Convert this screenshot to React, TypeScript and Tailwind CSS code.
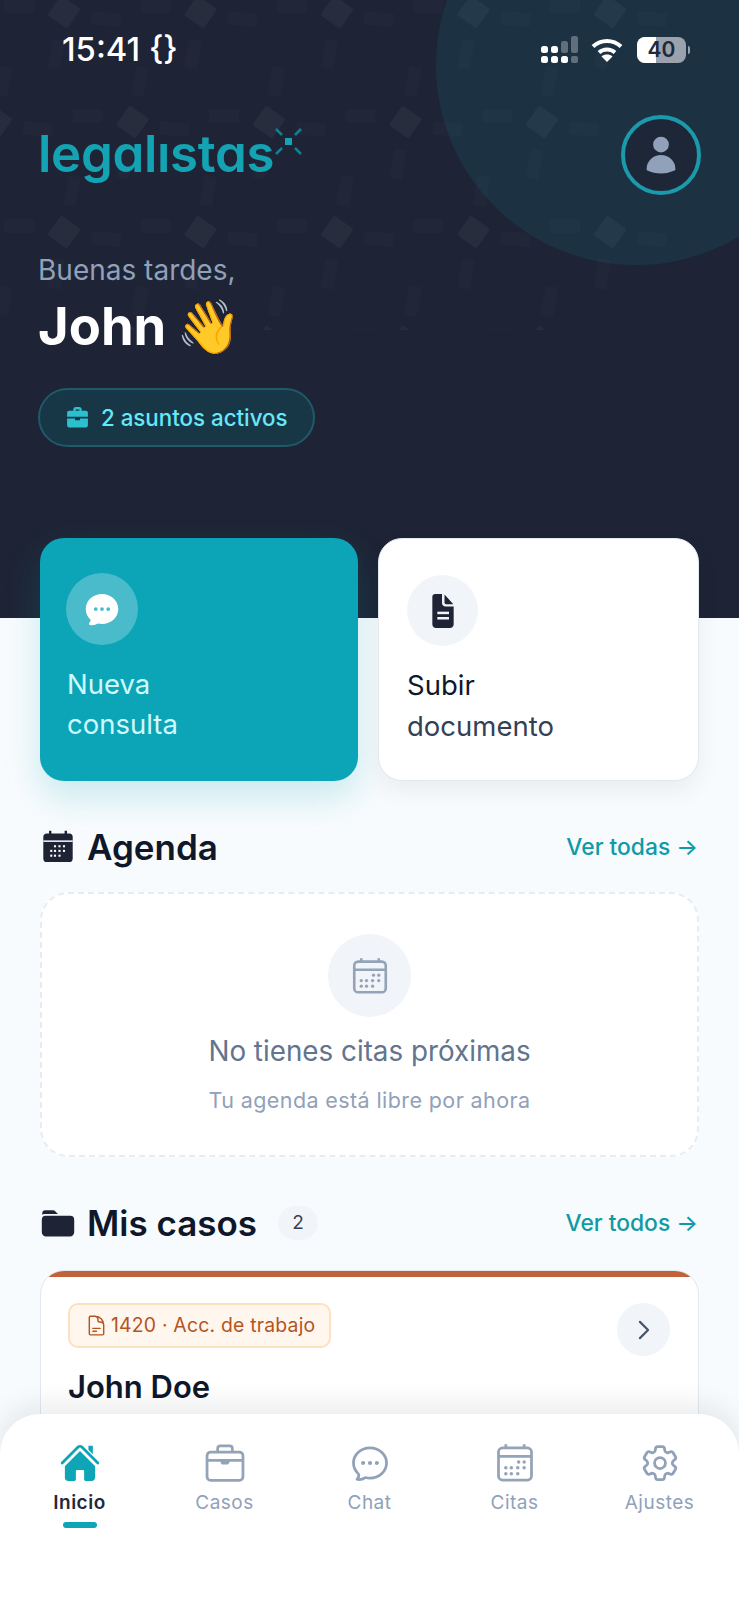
import {
  HiChatBubbleOvalLeftEllipsis,
  HiOutlineChatBubbleOvalLeftEllipsis,
  HiOutlineChevronRight,
  HiOutlineCog6Tooth,
  HiOutlineDocumentText,
  HiUser,
} from 'react-icons/hi2';

const rows = [12, 122, 232, 342];
const cols = [-4, 0, 1, 2, 3, 4];

function HeaderPattern() {
  return (
    <svg className="absolute left-0 top-0" width="739" height="330" viewBox="0 0 739 330">
      {rows.map((y, r) =>
        cols.map((c) => {
          const x = 64 + c * 136.5 - (r % 2 === 1 ? 68 : 0);
          return (
            <g key={`${r}-${c}`}>
              <rect x={x - 12} y={y - 12} width="24" height="24" rx="2" fill="#ffffff" opacity="0.045" transform={`rotate(35 ${x} ${y})`} />
              <rect x={x - 60} y={y - 13} width="30" height="14" rx="2" fill="#ffffff" opacity="0.015" />
              <rect x={x + 27} y={y} width="30" height="14" rx="2" fill="#ffffff" opacity="0.015" transform={`rotate(5 ${x + 42} ${y + 7})`} />
              <rect x={x - 14} y={y + 27} width="13" height="30" rx="2" fill="#ffffff" opacity="0.015" transform={`rotate(10 ${x - 8} ${y + 42})`} />
              <rect x={x - 67} y={y + 54} width="13" height="30" rx="2" fill="#ffffff" opacity="0.015" transform={`rotate(10 ${x - 61} ${y + 69})`} />
            </g>
          );
        }),
      )}
    </svg>
  );
}

function SignalIcon() {
  return (
    <svg width="38" height="28" viewBox="0 0 38 28">
      <rect x="0" y="10" width="7" height="7" rx="2.5" fill="#fff" />
      <rect x="10" y="10" width="7" height="7" rx="2.5" fill="#fff" />
      <rect x="0" y="20" width="7" height="7" rx="2.5" fill="#fff" />
      <rect x="10" y="20" width="7" height="7" rx="2.5" fill="#fff" />
      <rect x="20" y="20" width="7" height="7" rx="2.5" fill="#fff" />
      <rect x="20" y="5" width="7" height="12" rx="2.5" fill="#fff" opacity="0.3" />
      <rect x="30" y="0" width="7" height="17" rx="2.5" fill="#fff" opacity="0.3" />
      <rect x="30" y="20" width="7" height="7" rx="2" fill="#fff" opacity="0.3" />
    </svg>
  );
}

function WifiIcon() {
  return (
    <svg width="32" height="24" viewBox="0 0 32 24" fill="none" stroke="#fff" strokeWidth="4">
      <path d="M2 8.5C10 1 22 1 30 8.5" />
      <path d="M8 14.5C12.5 10.5 19.5 10.5 24 14.5" />
      <path d="M16 24l-5.5-5.5c3-2.6 8-2.6 11 0L16 24Z" fill="#fff" stroke="none" />
    </svg>
  );
}

function LogoMark() {
  return (
    <svg className="absolute -right-[29px] top-[-2px]" width="30" height="30" viewBox="0 0 30 30" stroke="#14808f" strokeWidth="2.5">
      <rect x="12" y="12" width="7" height="7" fill="#14a3b3" stroke="none" />
      <path d="M3 3l6 6M28 3l-6 6M3 28l6-6M28 28l-6-6" />
    </svg>
  );
}

function HomeIcon() {
  return (
    <svg width="44" height="44" viewBox="0 0 24 24" fill="#0ea5b7">
      <path d="M16.6 2.6h2.4v4.6l-2.4-2.4Z" />
      <path d="M11.47 3.841a.75.75 0 0 1 1.06 0l8.69 8.69a.75.75 0 1 0 1.06-1.06l-8.689-8.69a2.25 2.25 0 0 0-3.182 0l-8.69 8.69a.75.75 0 1 0 1.061 1.06l8.69-8.69Z" />
      <path d="m12 5.432 8.159 8.159c.03.03.06.058.091.086v6.198c0 1.035-.84 1.875-1.875 1.875H15a.75.75 0 0 1-.75-.75v-4.5a.75.75 0 0 0-.75-.75h-3a.75.75 0 0 0-.75.75V21a.75.75 0 0 1-.75.75H5.625a1.875 1.875 0 0 1-1.875-1.875v-6.198a2.29 2.29 0 0 0 .091-.086L12 5.432Z" />
    </svg>
  );
}

function CaseIcon() {
  return (
    <svg width="44" height="44" viewBox="0 0 24 24" fill="none" stroke="#94a3b8" strokeWidth="1.5" strokeLinejoin="round">
      <rect x="2.2" y="6" width="19.6" height="15.5" rx="2" />
      <path d="M8 6V4.2c0-.9.6-1.5 1.5-1.5h5c.9 0 1.5.6 1.5 1.5V6" />
      <path d="M2.2 10.5h19.6" />
      <path d="M10 10.5h4l-.6 1.5h-2.8Z" fill="#94a3b8" />
    </svg>
  );
}

const calendarDots = [
  [14, 11.5], [17, 11.5],
  [7, 14.6], [10, 14.6], [13.5, 14.6], [17, 14.6],
  [7, 17.8], [10, 17.8], [13.5, 17.8],
];

function CalendarOutline({ size }: { size: number }) {
  return (
    <svg width={size} height={size} viewBox="0 0 24 24" fill="none" stroke="#94a3b8" strokeWidth="1.5">
      <rect x="3" y="3.8" width="18" height="17.5" rx="2.2" />
      <path d="M3 8.4h18M7 1.8v2M17 1.8v2" />
      {calendarDots.map(([x, y]) => (
        <circle key={`${x}-${y}`} cx={x} cy={y} r="0.95" fill="#94a3b8" stroke="none" />
      ))}
    </svg>
  );
}

function CalendarSolid() {
  return (
    <svg width="36" height="36" viewBox="0 0 24 24" fill="#1e2435">
      <rect x="2.2" y="3" width="19.6" height="19" rx="2.4" />
      <path d="M6 1.2h1.6V4H6ZM16.4 1.2H18V4h-1.6Z" />
      <path d="M2.2 7.6h19.6v1H2.2Z" fill="#f8fbfd" />
      {[
        [10, 11.5], [13, 11.5], [16, 11.5],
        [7.5, 14.6], [10, 14.6], [13, 14.6], [16, 14.6],
        [7.5, 17.8], [10, 17.8], [13, 17.8],
      ].map(([x, y]) => (
        <rect key={`${x}-${y}`} x={x - 0.7} y={y - 0.7} width="1.4" height="1.4" fill="#f8fbfd" />
      ))}
    </svg>
  );
}

function FolderSolid() {
  return (
    <svg width="36" height="36" viewBox="0 0 24 24" fill="#1e2435">
      <path d="M1.5 5.5A2 2 0 0 1 3.5 3.5h5.2c.6 0 1 .2 1.4.6L12 6H3.2a3 3 0 0 0-1.7.5Z" />
      <path d="M1.2 9.8A2.6 2.6 0 0 1 3.8 7.2h16.4a2.6 2.6 0 0 1 2.6 2.6v8.4a2.8 2.8 0 0 1-2.8 2.8H4a2.8 2.8 0 0 1-2.8-2.8Z" />
    </svg>
  );
}

function DocSolid() {
  return (
    <svg width="40" height="40" viewBox="0 0 24 24" fill="#1e2435">
      <path d="M5.6 3.4c0-1 .8-1.6 1.6-1.6h4.2v5.4c0 1.2 1 2.1 2.1 2.1h4.9v10.6c0 1.3-1 2.3-2.3 2.3H7.9c-1.3 0-2.3-1-2.3-2.3Z" />
      <path d="M12.9 2.1l5.3 5.9h-4.2c-.6 0-1.1-.5-1.1-1.1Z" />
      <rect x="8.6" y="12.4" width="7" height="1.5" fill="#f1f5f9" />
      <rect x="8.6" y="15.6" width="7" height="1.5" fill="#f1f5f9" />
    </svg>
  );
}

function BriefcaseSolid() {
  return (
    <svg width="25" height="25" viewBox="0 0 24 24" fill="#2cc0cf">
      <path d="M8 6V4.2C8 3 8.9 2 10.2 2h3.6C15 2 16 3 16 4.2V6h-2.2V4.4h-3.6V6Z" />
      <path d="M2 7.6C2 6.5 2.9 5.6 4 5.6h16c1.1 0 2 .9 2 2v3.6H2Z" />
      <path d="M2 13h7.6v1.6h4.8V13H22v6.4c0 1.2-.9 2.1-2 2.1H4c-1.1 0-2-.9-2-2.1Z" />
    </svg>
  );
}

const navItems = [
  { label: 'Inicio', icon: <HomeIcon />, active: true },
  { label: 'Casos', icon: <CaseIcon /> },
  { label: 'Chat', icon: <HiOutlineChatBubbleOvalLeftEllipsis size={44} className="text-slate-400" /> },
  { label: 'Citas', icon: <CalendarOutline size={44} /> },
  { label: 'Ajustes', icon: <HiOutlineCog6Tooth size={44} className="text-slate-400" /> },
];

export default function App() {
  return (
    <div className="relative h-[1600px] overflow-hidden bg-[#f8fbfd] font-['Inter',sans-serif]">
      <header className="relative h-[618px] overflow-hidden bg-[#1e2435] px-[38px]">
        <HeaderPattern />
        <div className="absolute left-[436px] top-[-135px] h-[400px] w-[400px] rounded-full bg-[#0ea5b7]/[0.11]" />

        <div className="relative">
          <div className="flex h-[100px] items-center justify-between pl-[24px] pr-[15px]">
            <span className="text-[32.8px] font-medium text-white">15:41 {'{}'}</span>
            <div className="flex items-center">
              <div className="mr-[12px]">
                <SignalIcon />
              </div>
              <div className="mr-[14px]">
                <WifiIcon />
              </div>
              <div className="relative h-[26px] w-[49px]">
                <div className="relative flex h-full w-full items-center justify-center overflow-hidden rounded-[8px] bg-[#9aa3ad]">
                  <div className="absolute inset-y-0 left-0 w-[19px] bg-white" />
                  <span className="relative text-[21px] font-semibold text-[#1e293b]">40</span>
                </div>
                <span className="absolute -right-[4px] top-[9px] h-[8px] w-[2px] rounded-r-full bg-[#9aa3ad]" />
              </div>
            </div>
          </div>

          <div className="mt-[15px] flex h-[80px] items-center justify-between">
            <div className="relative -mt-[4px] text-[51px] font-semibold leading-none tracking-[-0.3px] text-[#14a3b3] [font-feature-settings:'cv11']">
              legalıstas
              <LogoMark />
            </div>
            <div className="flex h-[80px] w-[80px] items-center justify-center rounded-full border-[4px] border-[#1a9aaa] bg-[#1e2738]">
              <HiUser size={42} className="text-slate-400" />
            </div>
          </div>

          <p className="mt-[57px] text-[28px] leading-[36px] text-slate-400">Buenas tardes,</p>
          <h1 className="mt-[8px] text-[52.5px] font-bold leading-[60px] text-white [word-spacing:-3px]">John 👋</h1>

          <div className="mt-[32px] inline-flex h-[59px] items-center gap-[11px] rounded-full border-2 border-[#1e5a68] bg-[#173747] pl-[25px] pr-[25px]">
            <BriefcaseSolid />
            <span className="text-[22.3px] font-medium text-[#67e8f9]">2 asuntos activos</span>
          </div>
        </div>
      </header>

      <div className="relative -mt-[80px] grid grid-cols-[318px_321px] items-start gap-[20px] px-[40px]">
        <div className="h-[243px] rounded-[24px] bg-[#0ca5b8] pl-[27px] pt-[35px] shadow-[0_16px_36px_rgba(12,165,184,0.2)]">
          <div className="-ml-px flex h-[72px] w-[72px] items-center justify-center rounded-full bg-white/25">
            <HiChatBubbleOvalLeftEllipsis size={40} className="text-white" />
          </div>
          <p className="mt-[19px] text-[27.5px] leading-[40px] text-[#cffafe]">
            Nueva
            <br />
            consulta
          </p>
        </div>
        <div className="h-[243px] rounded-[24px] border border-slate-200 bg-white pl-[28px] pt-[36px] shadow-[0_10px_24px_rgba(15,23,42,0.06)]">
          <div className="flex h-[71px] w-[71px] items-center justify-center rounded-full bg-slate-100">
            <DocSolid />
          </div>
          <p className="mt-[19px] text-[27.5px] leading-[41px] text-[#334155]">
            <span className="text-[#0f172a]">Subir</span>
            <br />
            documento
          </p>
        </div>
      </div>

      <main className="relative px-[40px]">
        <section className="mt-[46px]">
          <div className="flex h-[40px] items-center justify-between">
            <h2 className="flex items-center gap-[11px] text-[35px] font-semibold text-[#0f172a]">
              <CalendarSolid />
              Agenda
            </h2>
            <span className="pr-px text-[22.8px] font-medium text-[#0f9aa5]">Ver todas →</span>
          </div>
          <div className="mt-[25px] flex h-[265px] flex-col items-center rounded-[28px] border-2 border-dashed border-[#e6ecf2] bg-white pt-[40px]">
            <div className="flex h-[83px] w-[83px] items-center justify-center rounded-full bg-slate-100">
              <CalendarOutline size={42} />
            </div>
            <p className="mt-[16px] text-[27.8px] leading-[36px] text-slate-500">No tienes citas próximas</p>
            <p className="mt-[16px] text-[21.5px] leading-[30px] tracking-[0.4px] text-slate-400">Tu agenda está libre por ahora</p>
          </div>
        </section>

        <section className="mt-[46px]">
          <div className="flex h-[40px] items-center justify-between">
            <div className="flex items-center gap-[21px]">
              <h2 className="flex items-center gap-[11px] text-[35px] font-semibold text-[#0f172a]">
                <FolderSolid />
                Mis casos
              </h2>
              <span className="flex h-[34px] w-[40px] items-center justify-center rounded-full bg-slate-100 text-[19px] text-[#334155]">2</span>
            </div>
            <span className="pr-px text-[22.8px] font-medium text-[#0f9aa5]">Ver todos →</span>
          </div>
          <div className="mt-[27px] h-[300px] overflow-hidden rounded-[24px] border border-slate-200 bg-white">
            <div className="h-[6px] bg-[#c2623a]" />
            <div className="pl-[27px] pr-[28px] pt-[26px]">
              <div className="flex items-start justify-between">
                <span className="flex h-[45px] items-center gap-[3px] rounded-[10px] border-2 border-[#fde0bd] bg-[#fff7ed] pl-[15px] pr-[14px] text-[19.4px] tracking-[0.2px] text-[#b4541f]">
                  <HiOutlineDocumentText size={23} />
                  1420 · Acc. de trabajo
                </span>
                <span className="flex h-[53px] w-[53px] items-center justify-center rounded-full bg-slate-100">
                  <HiOutlineChevronRight size={26} strokeWidth={2} className="text-[#475569]" />
                </span>
              </div>
              <p className="mt-[11px] text-[31px] font-semibold leading-[40px] text-[#0f172a]">John Doe</p>
            </div>
          </div>
        </section>
      </main>

      <nav className="absolute inset-x-0 bottom-0 grid h-[186px] grid-cols-5 rounded-t-[40px] bg-white px-[7px] pt-[27px] shadow-[0_-8px_28px_rgba(15,23,42,0.09)]">
        {navItems.map((item) => (
          <div key={item.label} className="flex flex-col items-center">
            {item.icon}
            <span className={`mt-[6px] text-[19px] leading-[24px] tracking-[0.5px] ${item.active ? 'font-semibold text-[#1e293b]' : 'font-normal text-slate-400'}`}>
              {item.label}
            </span>
            {item.active && <span className="mt-[7px] h-[6px] w-[34px] rounded-full bg-[#0ea5b7]" />}
          </div>
        ))}
      </nav>
    </div>
  );
}
